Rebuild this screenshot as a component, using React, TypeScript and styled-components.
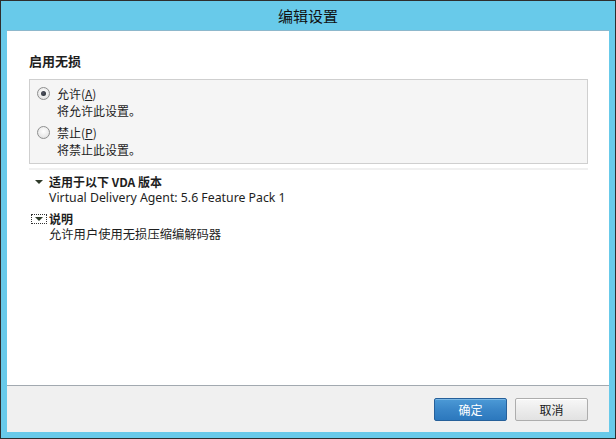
import React from "react";
import styled, { createGlobalStyle } from "styled-components";

const Global = createGlobalStyle`
  html, body { margin: 0; padding: 0; }
  body { font-family: "Noto Sans", "Noto Sans CJK SC", sans-serif; }
`;

const Window = styled.div`
  width: 616px;
  height: 439px;
  box-sizing: border-box;
  border: 1px solid #2e2e2e;
  background: #68caea;
  display: flex;
  flex-direction: column;
`;

const TitleBar = styled.div`
  height: 29px;
  display: flex;
  align-items: center;
  justify-content: center;
  font-family: "Noto Sans CJK SC", sans-serif;
  font-size: 15px;
  color: #111;
  flex-shrink: 0;
`;

const Client = styled.div`
  flex: 1;
  margin: 0 6px 6px 6px;
  border-top: 1px solid #8db8cc;
  display: flex;
  flex-direction: column;
  background: #fff;
`;

const Content = styled.div`
  flex: 1;
  padding: 17px 21px 0 22px;
  display: flex;
  flex-direction: column;
`;

const Heading = styled.div`
  font-family: "Noto Sans CJK SC", sans-serif;
  font-weight: 700;
  font-size: 13px;
  color: #1e1e1e;
  line-height: 26px;
  height: 26px;
`;

const GroupBox = styled.div`
  box-sizing: border-box;
  margin-top: 5px;
  height: 85px;
  border: 1px solid #cfcfcf;
  background: #f5f5f5;
  padding: 5px 6px 0 6px;
  display: flex;
  flex-direction: column;
  gap: 5px;
`;

const Option = styled.div`
  display: grid;
  grid-template-columns: 15px 1fr;
  column-gap: 6px;
  align-items: center;
`;

const Radio = styled.span<{ $checked?: boolean }>`
  width: 11px;
  height: 11px;
  border-radius: 50%;
  border: 1px solid #8e8f8f;
  background: radial-gradient(circle at 50% 40%, #ffffff 0%, #eaeaea 60%, #d6d6d6 100%);
  position: relative;
  justify-self: start;
  margin-left: 1px;
  &::after {
    content: "";
    display: ${(p) => (p.$checked ? "block" : "none")};
    position: absolute;
    left: 3px;
    top: 3px;
    width: 5px;
    height: 5px;
    border-radius: 50%;
    background: radial-gradient(circle at 40% 40%, #556 0%, #1f2a2a 100%);
  }
`;

const Line = styled.div<{ $indent?: boolean }>`
  font-family: "Noto Sans CJK SC", sans-serif;
  font-size: 12px;
  line-height: 17px;
  color: #1e1e1e;
  grid-column: ${(p) => (p.$indent ? "2" : "auto")};
  u { text-decoration: underline; }
`;

const Rule = styled.div`
  margin-top: 4px;
  height: 2px;
  background: #f0f0f0;
`;

const Section = styled.div<{ $top: number }>`
  margin-top: ${(p) => p.$top}px;
  display: grid;
  grid-template-columns: 20px 1fr;
  align-items: center;
`;

const Toggle = styled.span<{ $focus?: boolean }>`
  width: 16px;
  height: 10px;
  box-sizing: border-box;
  margin-left: 2px;
  display: flex;
  align-items: center;
  justify-content: center;
  border: 1px dotted ${(p) => (p.$focus ? "#333" : "transparent")};
  &::after {
    content: "";
    width: 0;
    height: 0;
    border-left: 4px solid transparent;
    border-right: 4px solid transparent;
    border-top: 4px solid #2f3b2a;
  }
`;

const SectionTitle = styled.div`
  font-family: "Noto Sans CJK SC", sans-serif;
  font-weight: 700;
  font-size: 12px;
  line-height: 17px;
  color: #1e1e1e;
`;

const SectionText = styled.div`
  grid-column: 2;
  font-family: "Noto Sans", "Noto Sans CJK SC", sans-serif;
  font-size: 12.3px;
  line-height: 16px;
  color: #1e1e1e;
`;

const Footer = styled.div`
  height: 46px;
  border-top: 1px solid #a2a9b0;
  background: #f0f0f0;
  display: flex;
  justify-content: flex-end;
  align-items: center;
  gap: 8px;
  padding-right: 21px;
`;

const Button = styled.button<{ $primary?: boolean }>`
  width: 73px;
  height: 23px;
  border-radius: 2px;
  font-family: "Noto Sans CJK SC", sans-serif;
  font-size: 12px;
  padding: 0;
  cursor: default;
  border: 1px solid ${(p) => (p.$primary ? "#26609a" : "#adadad")};
  color: ${(p) => (p.$primary ? "#ffffff" : "#1a1a1a")};
  background: ${(p) =>
    p.$primary
      ? "linear-gradient(#4c9ad6 0%, #3a86c8 50%, #2c78bd 100%)"
      : "linear-gradient(#f7f7f7 0%, #ececec 50%, #e2e2e2 100%)"};
  box-shadow: inset 0 1px 0 ${(p) => (p.$primary ? "#7bb8e6" : "#ffffff")};
`;

export default function App() {
  return (
    <>
      <Global />
      <Window>
        <TitleBar>编辑设置</TitleBar>
        <Client>
          <Content>
            <Heading>启用无损</Heading>
            <GroupBox>
              <Option>
                <Radio $checked />
                <Line>
                  允许(<u>A</u>)
                </Line>
                <Line $indent>将允许此设置。</Line>
              </Option>
              <Option>
                <Radio />
                <Line>
                  禁止(<u>P</u>)
                </Line>
                <Line $indent>将禁止此设置。</Line>
              </Option>
            </GroupBox>
            <Rule />
            <Section $top={3}>
              <Toggle />
              <SectionTitle>适用于以下 VDA 版本</SectionTitle>
              <SectionText>Virtual Delivery Agent: 5.6 Feature Pack 1</SectionText>
            </Section>
            <Section $top={4}>
              <Toggle $focus />
              <SectionTitle>说明</SectionTitle>
              <SectionText>允许用户使用无损压缩编解码器</SectionText>
            </Section>
          </Content>
          <Footer>
            <Button $primary>确定</Button>
            <Button>取消</Button>
          </Footer>
        </Client>
      </Window>
    </>
  );
}
